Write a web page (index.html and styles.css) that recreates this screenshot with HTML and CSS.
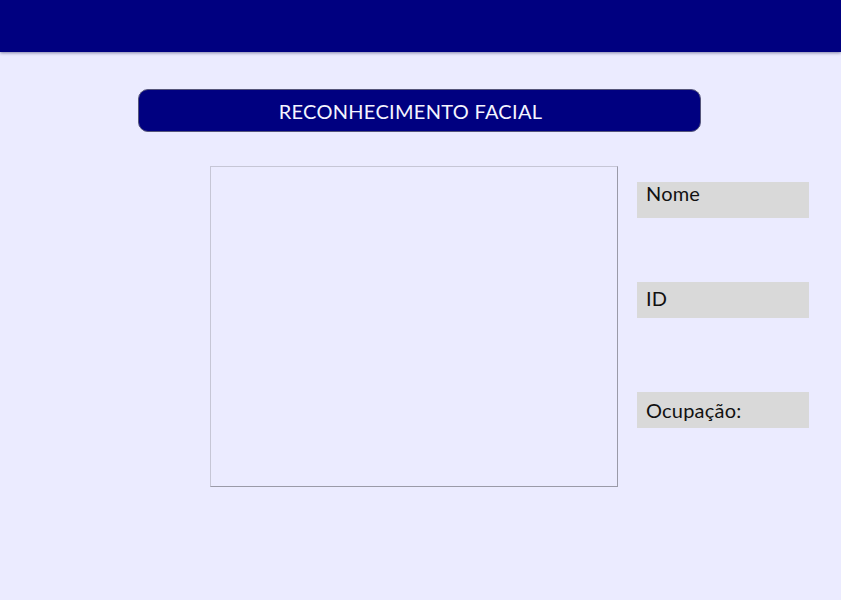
FILE: index.html
```html
<!DOCTYPE html>
<html lang="pt">
<head>
<meta charset="utf-8">
<title>Reconhecimento Facial</title>
<link rel="stylesheet" href="styles.css">
</head>
<body>
<header class="topbar"></header>
<main class="content">
  <div class="title-bar">RECONHECIMENTO FACIAL</div>
  <div class="row">
    <div class="camera"></div>
    <div class="fields">
      <div class="field field-nome">Nome</div>
      <div class="field field-id">ID</div>
      <div class="field field-ocup">Ocupação:</div>
    </div>
  </div>
</main>
</body>
</html>
```
FILE: styles.css
```css
html, body {
  margin: 0;
  padding: 0;
  background: #ebebff;
  font-family: Lato, "Noto Sans", sans-serif;
}
.topbar {
  height: 52px;
  background: #000080;
  box-shadow: 0 1px 3px rgba(0, 0, 60, 0.45);
}
.content {
  padding-top: 37px;
}
.title-bar {
  margin-left: 138px;
  width: 561px;
  height: 41px;
  box-sizing: content-box;
  border: 1px solid #55557a;
  border-radius: 10px;
  background: #000080;
  color: #f4f4ff;
  font-size: 20px;
  font-weight: 400;
  letter-spacing: 0.3px;
  display: flex;
  align-items: center;
  justify-content: center;
  text-indent: -18px;
}
.row {
  display: flex;
  margin-top: 34px;
  margin-left: 210px;
  gap: 19px;
}
.camera {
  width: 406px;
  height: 319px;
  border: 1px solid;
  border-color: #c6c6d6 #9a9aa8 #9a9aa8 #c6c6d6;
}
.fields {
  display: flex;
  flex-direction: column;
  padding-top: 16px;
}
.field {
  width: 163px;
  height: 36px;
  padding-left: 9px;
  background: #d9d9d9;
  color: #111;
  font-size: 20px;
  letter-spacing: 0.2px;
  box-sizing: content-box;
}
.field-nome {
  line-height: 22px;
}
.field-id {
  margin-top: 64px;
  line-height: 33px;
}
.field-ocup {
  margin-top: 74px;
  line-height: 37px;
}
```
